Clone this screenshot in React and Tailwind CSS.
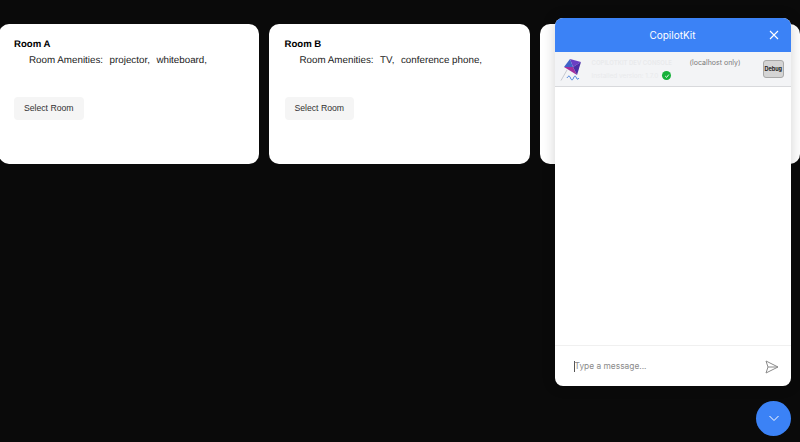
import React from "react";

function Card({ name, items }) {
  return (
    <div className="shrink-0 w-[260.5px] h-[140px] bg-white rounded-[10px] pl-[15.5px] pt-[14px] [text-rendering:geometricPrecision]">
      <div className="text-[9.6px] leading-[13px] font-bold text-black">{name}</div>
      <div className="mt-[3px] ml-[15px] text-[9.8px] leading-[14px] text-[#222] flex gap-[6.5px] whitespace-nowrap">
        <span>Room Amenities:</span>
        {items.map((i) => <span key={i}>{i},</span>)}
      </div>
      <button className="mt-[29px] block w-[69.5px] h-[23px] rounded-[4px] bg-[#f5f5f5] text-[8.7px] text-[#333]">Select Room</button>
    </div>
  );
}

function Kite() {
  return (
    <svg width="24" height="26" viewBox="0 0 24 26" fill="none" className="shrink-0">
      <path d="M10 3 L21 6 L13 11 Z" fill="#6a3fc4" />
      <path d="M10 3 L4 11 L13 11 Z" fill="#3f63c8" />
      <path d="M4 11 L17 19 L13 11 Z" fill="#a42f9c" />
      <path d="M21 6 L17 19 L13 11 Z" fill="#4b2fa6" />
      <path d="M7 14 L1 24.5" stroke="#a9adb5" strokeWidth="0.6" />
      <path d="M7 22 C8.5 19.5 9.5 19.5 10.5 22 C11.5 24.5 12.5 24.5 13.5 22 C14.5 19.5 15.5 19.5 16.5 22 C17 23.5 18 23.5 19 22" stroke="#2f6fd6" strokeWidth="0.9" />
    </svg>
  );
}

export default function App() {
  return (
    <div className="relative w-[800px] h-[442px] overflow-hidden bg-[#0a0a0a] font-['Liberation_Sans',Arial,sans-serif]">
      <div className="flex gap-[10px] pt-[24px] ml-[-1.5px]">
        <Card name="Room A" items={["projector", "whiteboard"]} />
        <Card name="Room B" items={["TV", "conference phone"]} />
        <div className="shrink-0 w-[260.5px] h-[140px] bg-white rounded-[10px]" />
      </div>

      <div className="absolute left-[554.5px] top-[18px] w-[236px] h-[368px] bg-white rounded-[8px] overflow-hidden flex flex-col font-['Inter',sans-serif] shadow-[0_0_14px_rgba(0,0,0,0.18)]">
        <div className="relative h-[34px] shrink-0 bg-[#3b82f6] flex items-center justify-center text-white text-[10px]">
          CopilotKit
          <svg className="absolute right-[12px] top-[12px]" width="10" height="10" viewBox="0 0 10 10" fill="none" stroke="white" strokeWidth="1.1">
            <path d="M1 1 L9 9 M9 1 L1 9" />
          </svg>
        </div>
        <div className="h-[35px] shrink-0 bg-[#f3f4f6] border-b border-[#d8d9dc] flex items-center pl-[5.5px] pr-[6.5px]">
          <Kite />
          <div className="ml-[7.5px] flex-1 min-w-0 flex flex-col gap-[4px] pt-[1px]">
            <div className="flex items-center gap-[5px] h-[8px] leading-[8px] whitespace-nowrap">
              <span className="w-[93px] text-[6px] font-semibold text-[#e9eaec]">COPILOTKIT DEV CONSOLE</span>
              <span className="text-[7px] text-[#7a7a7a]">(localhost only)</span>
            </div>
            <div className="flex items-center gap-[4px] h-[9px] leading-[8px] whitespace-nowrap">
              <span className="text-[6.5px] text-[#e9eaec]">Installed version: 1.7.0</span>
              <span className="w-[9px] h-[9px] rounded-full bg-[#16b13a] flex items-center justify-center">
                <svg width="6" height="6" viewBox="0 0 6 6" fill="none" stroke="white" strokeWidth="0.9"><path d="M1.2 3 L2.6 4.4 L4.8 1.6" /></svg>
              </span>
            </div>
          </div>
          <div className="shrink-0 w-[21.5px] h-[18px] rounded-[3px] bg-[#d4d4d4] border border-[#a8a8a8] flex items-center justify-center text-[5.5px] font-bold text-[#222]">Debug</div>
        </div>
        <div className="flex-1" />
        <div className="h-[41px] shrink-0 border-t border-[#f0f0f0] flex items-center pl-[19px] pr-[12px] pt-[1px]">
          <span className="w-px h-[11px] bg-[#555]" />
          <span className="text-[8.4px] text-[#8a8a8a]">Type a message...</span>
          <svg className="ml-auto" width="14" height="14" viewBox="0 0 14 14" fill="none" stroke="#8a8a8a" strokeWidth="1" strokeLinejoin="round">
            <path d="M1 1 L13 7 L1 13 L3 7 Z M3 7 H13" />
          </svg>
        </div>
      </div>

      <button className="absolute left-[756px] top-[401px] w-[35px] h-[35px] rounded-full bg-[#3b82f6] flex items-center justify-center">
        <svg width="12" height="7" viewBox="0 0 12 7" fill="none" stroke="white" strokeWidth="1"><path d="M1.5 1 L6 5.5 L10.5 1" /></svg>
      </button>
    </div>
  );
}
